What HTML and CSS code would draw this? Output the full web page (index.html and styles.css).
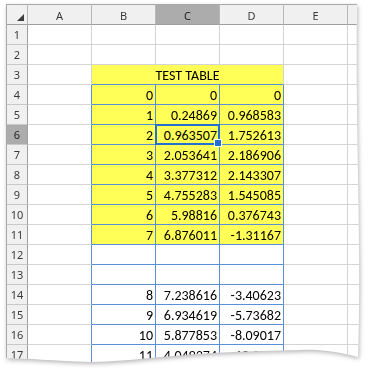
FILE: index.html
```html
<!DOCTYPE html>
<html>
<head>
<meta charset="utf-8">
<link rel="stylesheet" href="styles.css">
</head>
<body>
<div class="page">
  <div class="paper">
    <div class="sheet">
      <div class="h corner"><svg width="20" height="19" viewBox="0 0 20 19"><polygon points="17,9 17,16 10,16" fill="#3c3c3c"/></svg></div>
      <div class="h ch">A</div><div class="h ch">B</div><div class="h ch sel">C</div><div class="h ch">D</div><div class="h ch">E</div><div class="h ch"></div>

      <div class="h rh">1</div><div class="c"></div><div class="c"></div><div class="c"></div><div class="c"></div><div class="c"></div><div class="c"></div>
      <div class="h rh">2</div><div class="c"></div><div class="c"></div><div class="c"></div><div class="c"></div><div class="c"></div><div class="c"></div>
      <div class="h rh">3</div><div class="c"></div><div class="c y title">TEST TABLE</div><div class="c"></div><div class="c"></div>
      <div class="h rh">4</div><div class="c br"></div><div class="c y bx n">0</div><div class="c y bx n">0</div><div class="c y bx n">0</div><div class="c"></div><div class="c"></div>
      <div class="h rh">5</div><div class="c br"></div><div class="c y bx n">1</div><div class="c y bx n">0.24869</div><div class="c y bx n">0.968583</div><div class="c"></div><div class="c"></div>
      <div class="h rh sel">6</div><div class="c br"></div><div class="c y bx n">2</div><div class="c y bx n active">0.963507</div><div class="c y bx n">1.752613</div><div class="c"></div><div class="c"></div>
      <div class="h rh">7</div><div class="c br"></div><div class="c y bx n">3</div><div class="c y bx n">2.053641</div><div class="c y bx n">2.186906</div><div class="c"></div><div class="c"></div>
      <div class="h rh">8</div><div class="c br"></div><div class="c y bx n">4</div><div class="c y bx n">3.377312</div><div class="c y bx n">2.143307</div><div class="c"></div><div class="c"></div>
      <div class="h rh">9</div><div class="c br"></div><div class="c y bx n">5</div><div class="c y bx n">4.755283</div><div class="c y bx n">1.545085</div><div class="c"></div><div class="c"></div>
      <div class="h rh">10</div><div class="c br"></div><div class="c y bx n">6</div><div class="c y bx n">5.98816</div><div class="c y bx n">0.376743</div><div class="c"></div><div class="c"></div>
      <div class="h rh">11</div><div class="c br"></div><div class="c y bx n">7</div><div class="c y bx n">6.876011</div><div class="c y bx n">-1.31167</div><div class="c"></div><div class="c"></div>
      <div class="h rh">12</div><div class="c br"></div><div class="c bx n"></div><div class="c bx n"></div><div class="c bx n"></div><div class="c"></div><div class="c"></div>
      <div class="h rh">13</div><div class="c br"></div><div class="c bx n"></div><div class="c bx n"></div><div class="c bx n"></div><div class="c"></div><div class="c"></div>
      <div class="h rh">14</div><div class="c br"></div><div class="c bx n">8</div><div class="c bx n">7.238616</div><div class="c bx n">-3.40623</div><div class="c"></div><div class="c"></div>
      <div class="h rh">15</div><div class="c br"></div><div class="c bx n">9</div><div class="c bx n">6.934619</div><div class="c bx n">-5.73682</div><div class="c"></div><div class="c"></div>
      <div class="h rh">16</div><div class="c br"></div><div class="c bx n">10</div><div class="c bx n">5.877853</div><div class="c bx n">-8.09017</div><div class="c"></div><div class="c"></div>
      <div class="h rh">17</div><div class="c br"></div><div class="c bx n">11</div><div class="c bx n">4.049374</div><div class="c bx n">-10.2275</div><div class="c"></div><div class="c"></div>
    </div>
  </div>
</div>
</body>
</html>
```
FILE: styles.css
```css
* { box-sizing: border-box; }
html, body { margin: 0; padding: 0; background: #fff; overflow: hidden; }
.page { padding: 4px 0 0 6px; width: 369px; height: 371px; }
.paper {
  width: 354px;
  filter: drop-shadow(1px 2px 2px rgba(0,0,0,0.28));
}
.sheet {
  display: grid;
  grid-template-columns: 21px 64px 64px 64px 64px 64px 12px;
  grid-auto-rows: 20px;
  border-top: 1px solid #a9a9a9;
  border-left: 1px solid #a9a9a9;
  background: #fff;
  height: 362px;
  overflow: hidden;
  clip-path: path('M0 0 H351 C349 120 356 250 352 353 C330 347 310 345 294 346 C240 347 200 349 179 351 C140 354 110 358 84 358 C50 357 20 354 0 354 Z');
  font-family: Carlito, "Liberation Sans Narrow", "Liberation Sans", sans-serif;
  font-size: 14px;
  color: #000;
}
.sheet > div { border-right: 1px solid #d4d4d4; border-bottom: 1px solid #d4d4d4; }
.h {
  background: #f0f0f0;
  font-family: "Noto Sans", "Open Sans", sans-serif;
  font-size: 11px;
  color: #3a3a3a;
  display: flex;
  align-items: center;
  justify-content: center;
}
.sheet > .ch { border-right-color: #b9b9b9; border-bottom-color: #9f9f9f; height: 20px; padding-top: 2px; }
.sheet > .rh { border-right-color: #9f9f9f; border-bottom-color: #c9c9c9; }
.sheet > .corner { border-right-color: #b9b9b9; border-bottom-color: #9f9f9f; padding: 0; }
.corner svg { display: block; }
.h.sel { background: #acacac; color: #222; }
.c { display: flex; align-items: flex-end; line-height: 15px; padding: 0 2px 1px 2px; white-space: nowrap; }
.n { justify-content: flex-end; }
.y { background: #ffff57; }
.title { grid-column: span 3; justify-content: center; }
.sheet > .title { border-bottom-color: #5a8ed6; }
.sheet > .br { border-right-color: #5a8ed6; }
.sheet > .bx { border-right-color: #5a8ed6; border-bottom-color: #5a8ed6; }
.active { position: relative; }
.active::before {
  content: "";
  position: absolute;
  left: -1px; top: -1px; right: -1px; bottom: -1px;
  border: 2px solid #2470d0;
}
.active::after {
  content: "";
  position: absolute;
  right: -3px; bottom: -3px;
  width: 6px; height: 6px;
  background: #2470d0;
  border: 1px solid #fff;
  z-index: 2;
}
```
